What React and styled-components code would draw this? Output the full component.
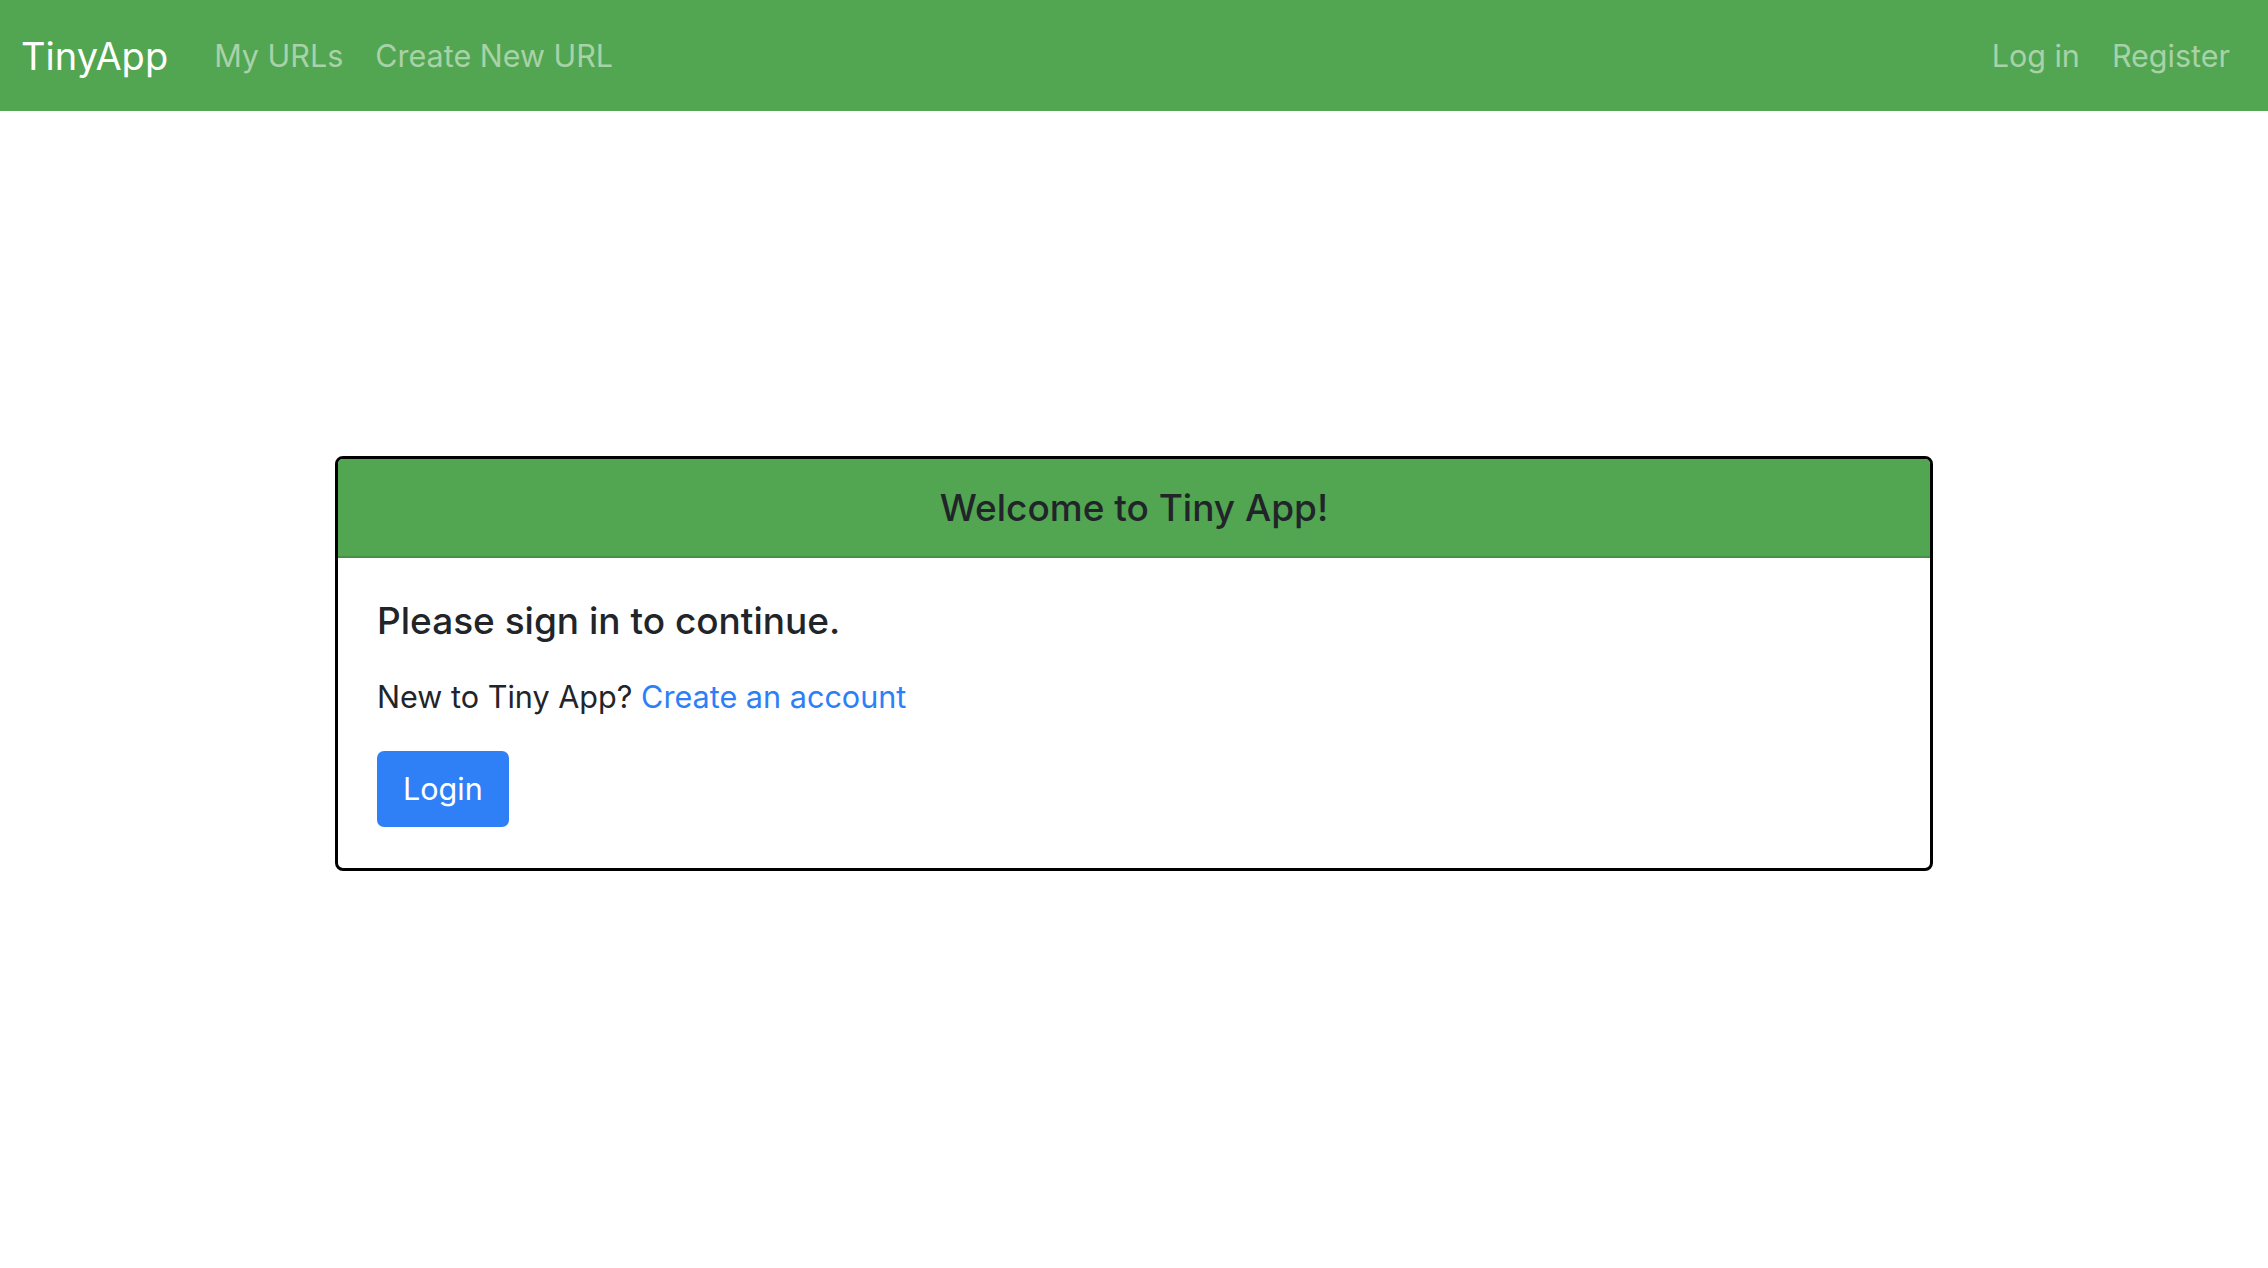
import React from 'react'
import styled, { createGlobalStyle } from 'styled-components';

const GlobalStyle = createGlobalStyle`
  html, body {
    margin: 0;
    padding: 0;
    background: #fff;
  }
  body {
    font-family: Inter, "Noto Sans", "Liberation Sans", sans-serif;
    color: #212529;
    font-size: 31px;
    line-height: 1.5;
  }
  * {
    box-sizing: border-box;
  }
`;

const NavBar = styled.nav`
  display: flex;
  align-items: center;
  justify-content: space-between;
  height: 111px;
  padding: 0 22px 0 21px;
  background-color: #52a551;
`;

const NavGroup = styled.ul`
  display: flex;
  align-items: center;
  margin: 0;
  padding: 0;
  list-style: none;
`;

const Brand = styled.a`
  margin-right: 30px;
  font-size: 38px;
  line-height: 58px;
  color: #fff;
  text-decoration: none;
`;

const NavItem = styled.a`
  display: block;
  padding: 0 16px;
  font-size: 30.5px;
  color: rgba(255, 255, 255, 0.5);
  text-decoration: none;
  &:hover {
    color: rgba(255, 255, 255, 0.75);
  }
`;

const Main = styled.main`
  display: flex;
  justify-content: center;
  padding-top: 345px;
`;

const Card = styled.div`
  width: 1598px;
  border: 3px solid #000;
  border-radius: 8px;
  overflow: hidden;
`;

const CardHeader = styled.div`
  padding: 25px 39px;
  background-color: #52a551;
  border-bottom: 2px solid rgba(0, 0, 0, 0.125);
  text-align: center;
`;

// h5 in both header and body share one look
const Title = styled.h5`
  margin: ${(p) => (p.$spaced ? '0 0 29px' : '0')};
  font-size: 37px;
  font-weight: 500;
  line-height: 47px;
`;

const CardBody = styled.div`
  padding: 39px 39px 41px;
`;

const CardText = styled.p`
  margin: 0 0 31px;
  font-size: 30.6px;
  line-height: 47px;
`;

const TextLink = styled.a`
  color: #2d7ff7;
  text-decoration: none;
`;

const Button = styled.button`
  display: inline-block;
  height: 76px;
  padding: 0 26px;
  border: none;
  border-radius: 7px;
  background-color: #2f80f6;
  color: #fff;
  font-family: inherit;
  font-size: 30.5px;
  line-height: 76px;
  cursor: pointer;
`;

export default function App() {
  return (
    <>
      <GlobalStyle />
      <NavBar>
        <NavGroup>
          <li><Brand href="#">TinyApp</Brand></li>
          <li><NavItem href="#">My URLs</NavItem></li>
          <li><NavItem href="#">Create New URL</NavItem></li>
        </NavGroup>
        <NavGroup>
          <li><NavItem href="#">Log in</NavItem></li>
          <li><NavItem href="#">Register</NavItem></li>
        </NavGroup>
      </NavBar>
      <Main>
        <Card>
          <CardHeader>
            <Title>Welcome to Tiny App!</Title>
          </CardHeader>
          <CardBody>
            <Title $spaced>Please sign in to continue.</Title>
            <CardText>
              New to Tiny App? <TextLink href="#">Create an account</TextLink>
            </CardText>
            <Button>Login</Button>
          </CardBody>
        </Card>
      </Main>
    </>
  )
}
